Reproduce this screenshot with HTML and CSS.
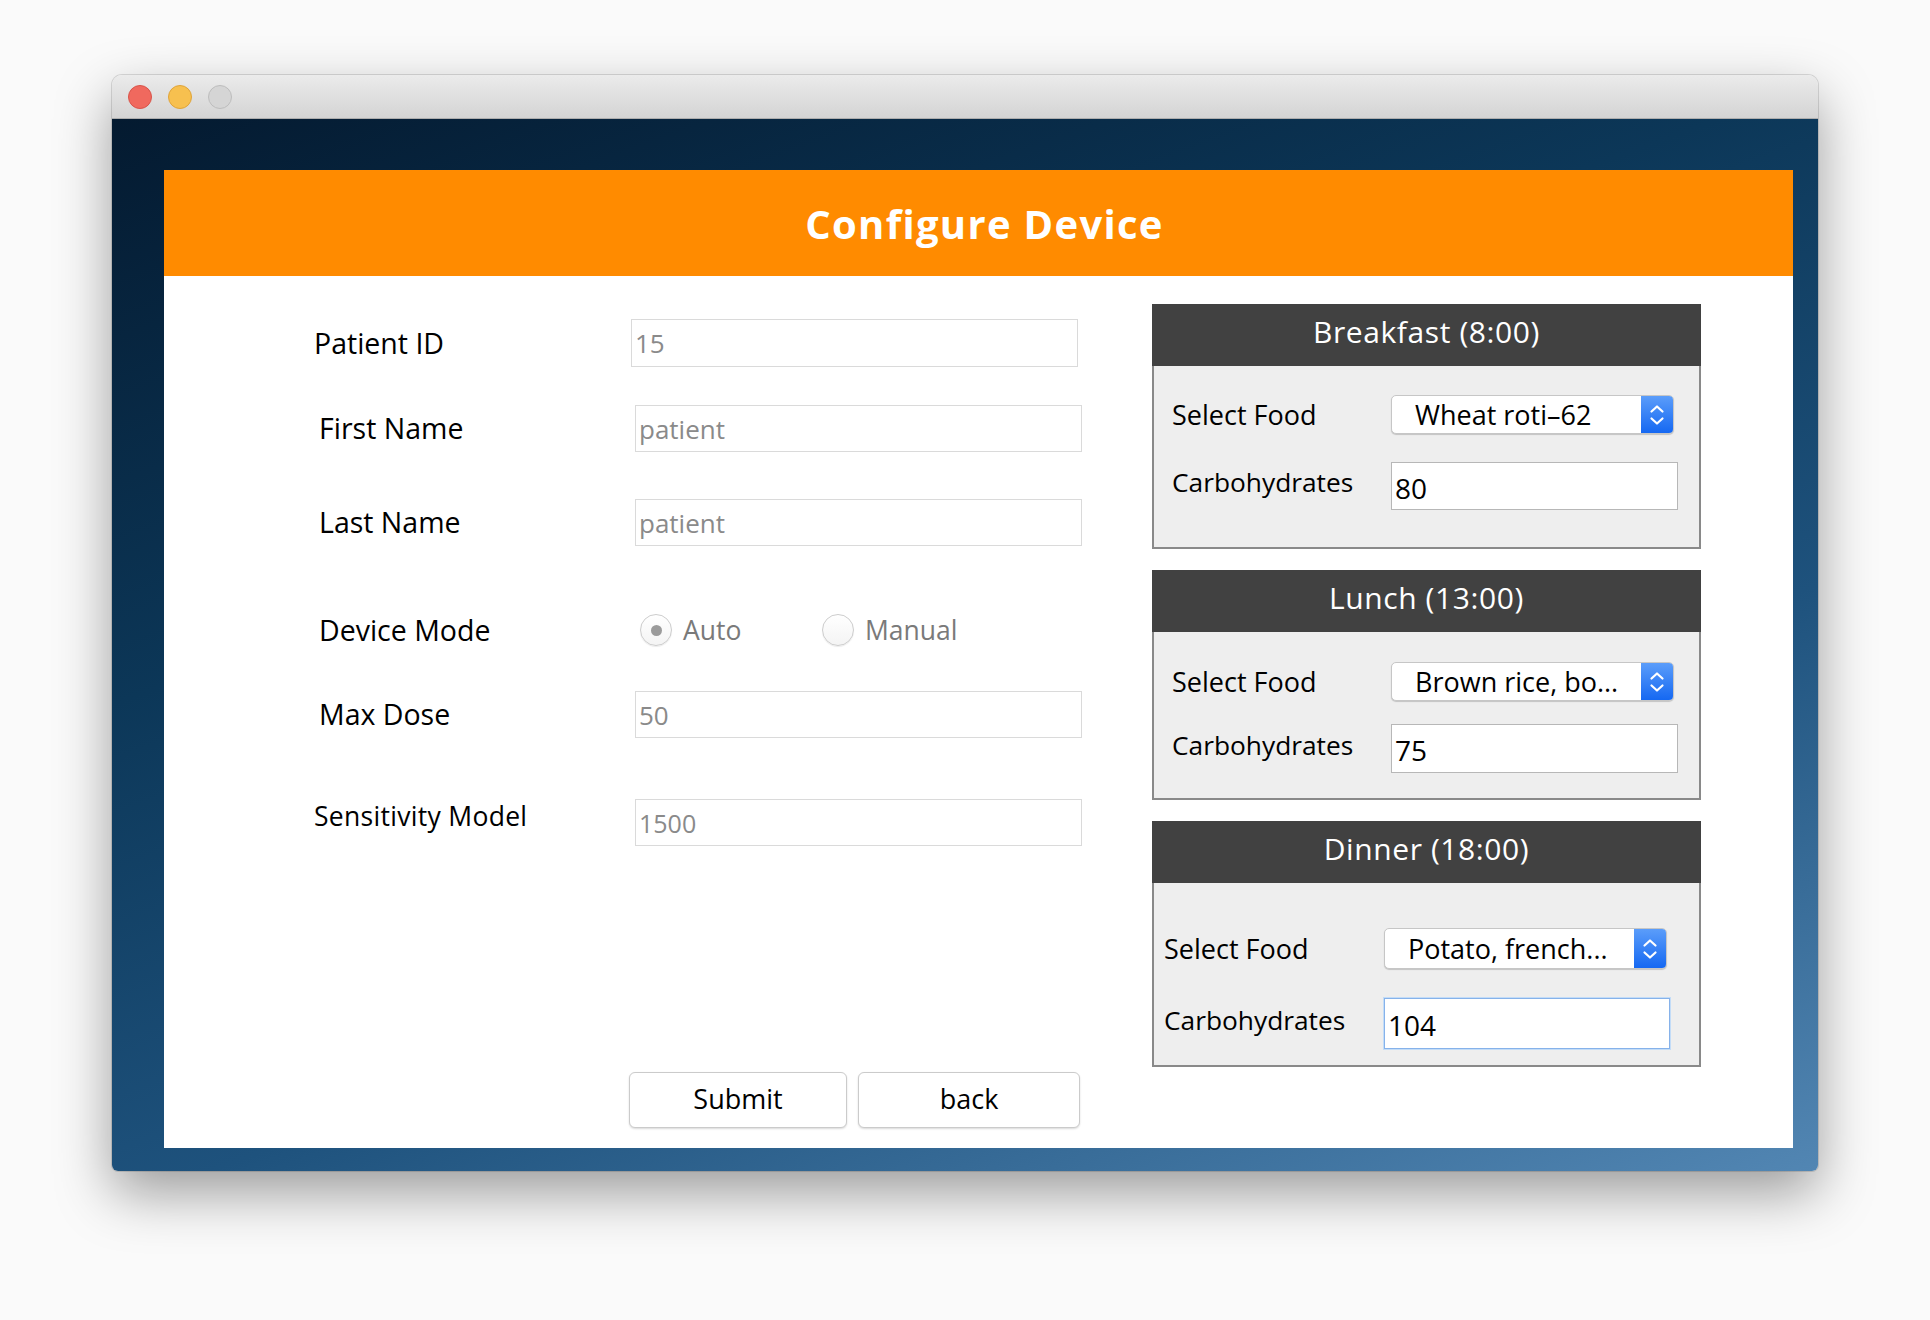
FILE: index.html
```html
<!DOCTYPE html>
<html>
<head>
<meta charset="utf-8">
<title>Configure Device</title>
<link rel="stylesheet" href="styles.css">
</head>
<body>
<div class="stage">
  <div class="window">
    <div class="titlebar">
      <span class="light light-red"></span>
      <span class="light light-yellow"></span>
      <span class="light light-gray"></span>
    </div>
    <div class="content">
      <div class="sheet">
        <div class="banner">Configure Device</div>
        <div class="sheet-body">
          <div class="form">
            <div class="row row-id">
              <div class="label">Patient ID</div>
              <div class="field">15</div>
            </div>
            <div class="row row-first">
              <div class="label">First Name</div>
              <div class="field">patient</div>
            </div>
            <div class="row row-last">
              <div class="label">Last Name</div>
              <div class="field">patient</div>
            </div>
            <div class="row row-mode">
              <div class="label">Device Mode</div>
              <div class="radios">
                <div class="radio-opt radio-auto"><span class="radio radio-on"></span><span class="radio-text">Auto</span></div>
                <div class="radio-opt"><span class="radio"></span><span class="radio-text">Manual</span></div>
              </div>
            </div>
            <div class="row row-max">
              <div class="label">Max Dose</div>
              <div class="field">50</div>
            </div>
            <div class="row row-sens">
              <div class="label label-sens">Sensitivity Model</div>
              <div class="field field-sens">1500</div>
            </div>
            <div class="buttons">
              <div class="btn btn-submit">Submit</div>
              <div class="btn btn-back">back</div>
            </div>
          </div>
          <div class="meals">
            <div class="meal meal-breakfast">
              <div class="meal-head">Breakfast (8:00)</div>
              <div class="meal-body">
                <div class="meal-row">
                  <div class="meal-label">Select Food</div>
                  <div class="select">
                    <span class="select-text">Wheat roti&#8211;62</span>
                    <span class="stepper"><svg width="32" height="40" viewBox="0 0 32 40"><path d="M10.5 16.5 L16 11.5 L21.5 16.5" fill="none" stroke="#fff" stroke-width="2.2" stroke-linecap="round" stroke-linejoin="round"/><path d="M10.5 23.5 L16 28.5 L21.5 23.5" fill="none" stroke="#fff" stroke-width="2.2" stroke-linecap="round" stroke-linejoin="round"/></svg></span>
                  </div>
                </div>
                <div class="meal-row meal-row-carb">
                  <div class="meal-label">Carbohydrates</div>
                  <div class="carb">80</div>
                </div>
              </div>
            </div>
            <div class="meal meal-lunch">
              <div class="meal-head">Lunch (13:00)</div>
              <div class="meal-body">
                <div class="meal-row">
                  <div class="meal-label">Select Food</div>
                  <div class="select">
                    <span class="select-text">Brown rice, bo...</span>
                    <span class="stepper"><svg width="32" height="40" viewBox="0 0 32 40"><path d="M10.5 16.5 L16 11.5 L21.5 16.5" fill="none" stroke="#fff" stroke-width="2.2" stroke-linecap="round" stroke-linejoin="round"/><path d="M10.5 23.5 L16 28.5 L21.5 23.5" fill="none" stroke="#fff" stroke-width="2.2" stroke-linecap="round" stroke-linejoin="round"/></svg></span>
                  </div>
                </div>
                <div class="meal-row meal-row-carb">
                  <div class="meal-label">Carbohydrates</div>
                  <div class="carb">75</div>
                </div>
              </div>
            </div>
            <div class="meal meal-dinner">
              <div class="meal-head">Dinner (18:00)</div>
              <div class="meal-body">
                <div class="meal-row">
                  <div class="meal-label">Select Food</div>
                  <div class="select">
                    <span class="select-text">Potato, french...</span>
                    <span class="stepper"><svg width="32" height="40" viewBox="0 0 32 40"><path d="M10.5 16.5 L16 11.5 L21.5 16.5" fill="none" stroke="#fff" stroke-width="2.2" stroke-linecap="round" stroke-linejoin="round"/><path d="M10.5 23.5 L16 28.5 L21.5 23.5" fill="none" stroke="#fff" stroke-width="2.2" stroke-linecap="round" stroke-linejoin="round"/></svg></span>
                  </div>
                </div>
                <div class="meal-row meal-row-carb">
                  <div class="meal-label">Carbohydrates</div>
                  <div class="carb carb-focus">104</div>
                </div>
              </div>
            </div>
          </div>
        </div>
      </div>
    </div>
  </div>
</div>
</body>
</html>
```

FILE: styles.css
```css
* { box-sizing: border-box; }
html, body { margin: 0; padding: 0; }
body {
  background: #fafafa;
  font-family: "Open Sans", "DejaVu Sans", sans-serif;
  color: #000;
  width: 1930px;
  height: 1320px;
  overflow: hidden;
}
.stage {
  padding: 75px 0 0 112px;
}
.window {
  width: 1706px;
  border-radius: 10px 10px 6px 6px;
  box-shadow: 0 22px 55px rgba(0,0,0,0.38), 0 0 0 1px rgba(0,0,0,0.12);
}
.titlebar {
  height: 44px;
  border-radius: 10px 10px 0 0;
  background: linear-gradient(#ebebeb, #d4d4d4);
  border-bottom: 1px solid #adadad;
  display: flex;
  align-items: center;
  gap: 16px;
  padding-left: 16px;
}
.light {
  width: 24px;
  height: 24px;
  border-radius: 50%;
  display: block;
}
.light-red { background: #f0695e; border: 1px solid #d8544a; }
.light-yellow { background: #f7c04f; border: 1px solid #dfa43a; }
.light-gray { background: #d5d5d5; border: 1px solid #bdbdbd; }
.content {
  padding: 51px 25px 23px 52px;
  border-radius: 0 0 6px 6px;
  background: linear-gradient(160deg, #041a30 0%, #0c3758 35%, #1e527d 65%, #5286b3 100%);
}
.sheet {
  background: #fff;
  height: 978px;
  display: flex;
  flex-direction: column;
}
.banner {
  height: 106px;
  background: #ff8b00;
  color: #fff;
  font-weight: 700;
  font-size: 40px;
  letter-spacing: 1.3px;
  display: flex;
  align-items: center;
  justify-content: center;
  padding-left: 12px;
}
.sheet-body {
  flex: 1;
  display: flex;
}
.form {
  width: 988px;
  display: flex;
  flex-direction: column;
}
.row {
  display: flex;
  align-items: center;
  padding-left: 155px;
  height: 47px;
}
.label {
  width: 316px;
  font-size: 28.5px;
  color: #000;
  line-height: 1;
}
.field {
  width: 447px;
  height: 47px;
  border: 1px solid #dadada;
  background: #fff;
  color: #8a8a8a;
  font-size: 26px;
  display: flex;
  align-items: center;
  padding-left: 3px;
}
.row-id { margin-top: 43px; padding-left: 150px; height: 48px; }
.row-id .label { width: 317px; }
.row-id .field { height: 48px; }
.row-first { margin-top: 38px; }
.row-last { margin-top: 47px; }
.row-mode { margin-top: 68px; height: 32px; }
.row-mode .label { width: 321px; }
.row-max { margin-top: 45px; }
.row-sens { margin-top: 61px; padding-left: 150px; }
.row-sens .label { width: 321px; align-self: flex-start; margin-top: 4px; }
.label-sens { font-size: 26.5px; letter-spacing: 0.3px; }
.field-sens { font-size: 25px; }
.radios {
  display: flex;
  align-items: center;
}
.radio-opt {
  display: flex;
  align-items: center;
  gap: 11px;
}
.radio-auto { width: 182px; }
.radio {
  width: 32px;
  height: 32px;
  border-radius: 50%;
  border: 1px solid #cdcdcd;
  background: linear-gradient(#ffffff, #f4f4f4);
  box-shadow: 0 1px 1px rgba(0,0,0,0.08);
  display: flex;
  align-items: center;
  justify-content: center;
}
.radio-on::after {
  content: "";
  width: 11px;
  height: 11px;
  border-radius: 50%;
  background: #9b9b9b;
}
.radio-text {
  font-size: 26.5px;
  color: #7a7a7a;
}
.buttons {
  display: flex;
  gap: 11px;
  padding-left: 465px;
  margin-top: 226px;
}
.btn {
  height: 56px;
  border: 1px solid #cbcbcb;
  border-radius: 6px;
  background: #fff;
  box-shadow: 0 1px 2px rgba(0,0,0,0.15);
  display: flex;
  align-items: center;
  justify-content: center;
  padding-bottom: 3px;
  font-size: 27px;
  color: #000;
}
.btn-submit { width: 218px; }
.btn-back { width: 222px; }
.meals {
  width: 549px;
  padding-top: 28px;
  display: flex;
  flex-direction: column;
  gap: 21px;
}
.meal-head {
  height: 62px;
  background: #414141;
  color: #fff;
  font-size: 30px;
  display: flex;
  align-items: center;
  justify-content: center;
  letter-spacing: 0.6px;
  padding-bottom: 7px;
}
.meal-body {
  background: #eeeeee;
  border: 2px solid #898989;
  border-top: none;
  display: flex;
  flex-direction: column;
  padding-left: 18px;
}
.meal-row {
  display: flex;
  align-items: center;
}
.meal-label {
  width: 219px;
  font-size: 27px;
  color: #000;
}
.meal-row-carb .meal-label {
  font-size: 26.3px;
  padding-bottom: 8px;
}
.select {
  width: 283px;
  height: 39px;
  background: #fff;
  border: 1px solid #c6c6c6;
  border-radius: 5px;
  box-shadow: 0 1px 1px rgba(0,0,0,0.18);
  display: flex;
  align-items: center;
  overflow: hidden;
}
.select-text {
  flex: 1;
  padding-left: 23px;
  font-size: 27px;
  color: #000;
  white-space: nowrap;
}
.stepper {
  width: 32px;
  height: 100%;
  background: linear-gradient(#5b9dfa, #1568f2);
  display: flex;
  align-items: center;
  justify-content: center;
}
.stepper svg { display: block; }
.carb {
  width: 287px;
  height: 48px;
  background: #fff;
  border: 1px solid #b7b7b7;
  font-size: 28px;
  color: #000;
  display: flex;
  align-items: center;
  padding-left: 3px;
  padding-top: 3px;
}
.meal-breakfast .meal-body { padding-top: 29px; padding-bottom: 37px; }
.meal-breakfast .meal-row-carb { margin-top: 28px; }
.meal-lunch .meal-body { padding-top: 30px; padding-bottom: 25px; }
.meal-lunch .meal-row-carb { margin-top: 23px; }
.meal-lunch .carb { height: 49px; }
.meal-dinner .meal-body { padding-top: 45px; padding-bottom: 16px; padding-left: 10px; }
.meal-dinner .meal-label { width: 220px; }
.meal-dinner .select { height: 41px; }
.meal-dinner .meal-row-carb { margin-top: 29px; }
.meal-dinner .carb { height: 51px; width: 286px; }
.carb-focus { border: 1px solid #86b2ea; box-shadow: 0 0 0 1px #c3dcf7; }
```
